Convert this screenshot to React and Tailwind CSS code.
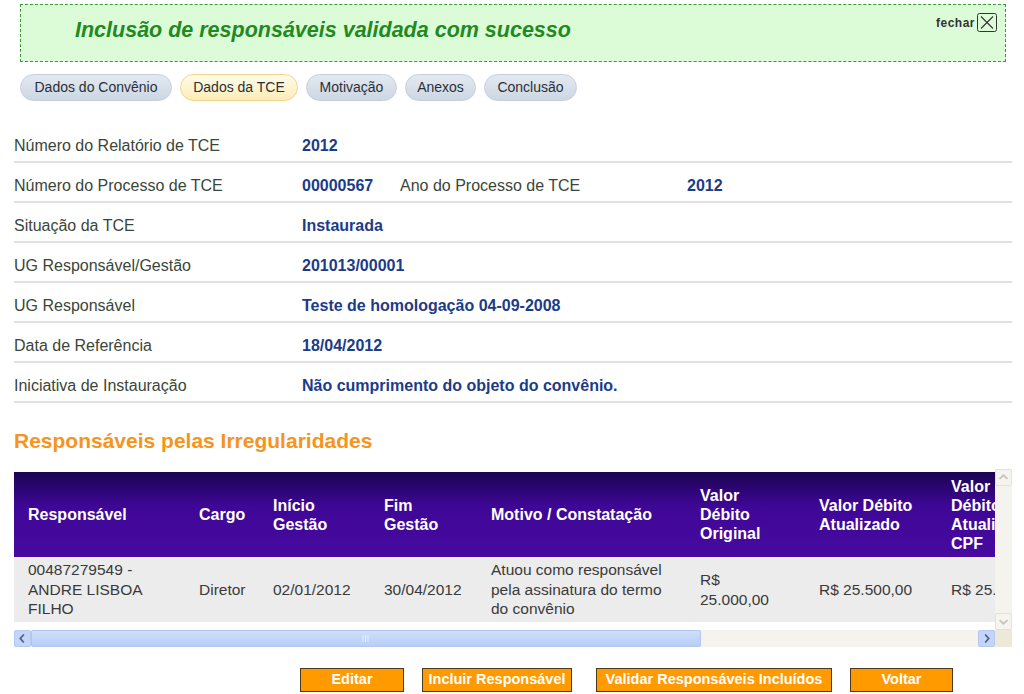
import React from "react"

const tabs = [
  { label: "Dados do Convênio", w: "w-[152px]" },
  { label: "Dados da TCE", w: "w-[118px]", active: true },
  { label: "Motivação", w: "w-[91px]" },
  { label: "Anexos", w: "w-[71px]" },
  { label: "Conclusão", w: "w-[93px]" },
]

const rows = [
  { label: "Número do Relatório de TCE", value: "2012" },
  { label: "Número do Processo de TCE", value: "00000567", label2: "Ano do Processo de TCE", value2: "2012" },
  { label: "Situação da TCE", value: "Instaurada" },
  { label: "UG Responsável/Gestão", value: "201013/00001" },
  { label: "UG Responsável", value: "Teste de homologação 04-09-2008" },
  { label: "Data de Referência", value: "18/04/2012" },
  { label: "Iniciativa de Instauração", value: "Não cumprimento do objeto do convênio." },
]

const cols = [
  { head: "Responsável", w: 171, cell: "00487279549 - ANDRE LISBOA FILHO" },
  { head: "Cargo", w: 74, cell: "Diretor" },
  { head: "Início Gestão", w: 111, cell: "02/01/2012" },
  { head: "Fim Gestão", w: 107, cell: "30/04/2012" },
  { head: "Motivo / Constatação", w: 209, cell: "Atuou como responsável pela assinatura do termo do convênio" },
  { head: "Valor Débito Original", w: 119, cell: "R$ 25.000,00" },
  { head: "Valor Débito Atualizado", w: 132, cell: "R$ 25.500,00" },
  { head: "Valor Débito Atualizado CPF", w: 120, cell: "R$ 25.500,00", nowrap: true },
]

const buttons = [
  { label: "Editar", cls: "w-[104px]" },
  { label: "Incluir Responsável", cls: "w-[150px] ml-[18px]" },
  { label: "Validar Responsáveis Incluídos", cls: "w-[236px] ml-[24px]" },
  { label: "Voltar", cls: "w-[103px] ml-[18px]" },
]

function ArrowBtn({ dir, faded }) {
  const d = {
    left: "M10 4 L6 8.5 L10 13",
    right: "M7 4 L11 8.5 L7 13",
    up: "M4 10 L8.5 6 L13 10",
    down: "M4 7 L8.5 11 L13 7",
  }[dir]
  return (
    <div
      className={
        "w-[17px] h-[17px] shrink-0 rounded-[2px] border flex items-center justify-center " +
        (faded ? "border-[#e4e2d8] bg-[#f5f4ee]" : "border-[#b5c8ee] bg-[#c3d5fb]")
      }
    >
      <svg width="17" height="17" viewBox="0 0 17 17">
        <path d={d} fill="none" stroke={faded ? "#c7c5bb" : "#4d6185"} strokeWidth="2" />
      </svg>
    </div>
  )
}

export default function App() {
  return (
    <div className="w-[1024px] h-[694px] bg-white overflow-hidden font-['Liberation_Sans',Arial,sans-serif]">
      {/* success message */}
      <div className="ml-[20px] mt-[4px] w-[986px] h-[58px] border border-dashed border-[#3c9a3c] bg-[#dcfcd8] flex items-start">
        <div className="flex-1 pl-[54px] pt-[12px] text-[21.5px] leading-[26px] font-bold italic text-[#1f8a1f]">
          Inclusão de responsáveis validada com sucesso
        </div>
        <div className="flex items-center gap-[2px] pt-[8px] pr-[8px]">
          <span className="text-[12px] font-bold text-[#333] tracking-[0.5px]">fechar</span>
          <svg width="20" height="19" viewBox="0 0 20 19">
            <rect x="0.5" y="0.5" width="19" height="18" rx="2" fill="none" stroke="#333" />
            <path d="M4 3.5 L16 15.5 M16 3.5 L4 15.5" stroke="#333" strokeWidth="1.1" />
          </svg>
        </div>
      </div>

      {/* tabs */}
      <div className="ml-[20px] mt-[12px] flex gap-[8px]">
        {tabs.map((t) => (
          <div
            key={t.label}
            className={
              t.w +
              " h-[27px] rounded-[14px] border flex items-center justify-center text-[14px] text-[#2a2f38] " +
              (t.active
                ? "border-[#f0d68a] bg-gradient-to-b from-[#fffbe8] to-[#fbecb8]"
                : "border-[#c5d0dc] bg-gradient-to-b from-[#e3e9f0] to-[#ccd7e3]")
            }
          >
            {t.label}
          </div>
        ))}
      </div>

      {/* info rows */}
      <div className="ml-[14px] mt-[22px] w-[998px]">
        {rows.map((r) => (
          <div key={r.label} className="h-[40px] border-b-2 border-[#e0e0e0] flex items-end pb-[6px] text-[16px] leading-[18px]">
            <div className="w-[288px] text-[#3a463a]">{r.label}</div>
            <div className={(r.label2 ? "w-[98px]" : "") + " font-bold text-[#1c3b88]"}>{r.value}</div>
            {r.label2 && (
              <>
                <div className="w-[287px] text-[#3a463a]">{r.label2}</div>
                <div className="font-bold text-[#1c3b88]">{r.value2}</div>
              </>
            )}
          </div>
        ))}
      </div>

      <h2 className="ml-[14px] mt-[26px] text-[21px] leading-[24px] font-bold text-[#f5941e]">
        Responsáveis pelas Irregularidades
      </h2>

      {/* table with scrollbars */}
      <div className="ml-[14px] mt-[16px] w-[998px]">
        <div className="flex">
          <div className="w-[981px] h-[161px] overflow-hidden pt-[3px] bg-white">
            <table className="table-fixed border-collapse" style={{ width: cols.reduce((s, c) => s + c.w, 0) }}>
              <colgroup>
                {cols.map((c) => (
                  <col key={c.head} style={{ width: c.w }} />
                ))}
              </colgroup>
              <thead>
                <tr className="h-[85px] bg-gradient-to-b from-[#1c0452] via-[#3e0796] via-[40%] to-[#470aa0]">
                  {cols.map((c) => (
                    <th key={c.head} className="text-left align-middle pl-[14px] pr-[16px] text-[16px] leading-[19px] font-bold text-white">
                      {c.head}
                    </th>
                  ))}
                </tr>
              </thead>
              <tbody>
                <tr className="h-[65px] bg-[#ececec]">
                  {cols.map((c) => (
                    <td
                      key={c.head}
                      className={
                        "align-middle pl-[14px] pr-[16px] text-[15.5px] leading-[19.5px] text-[#3a3a3a] " +
                        (c.nowrap ? "whitespace-nowrap" : "")
                      }
                    >
                      {c.cell}
                    </td>
                  ))}
                </tr>
              </tbody>
            </table>
          </div>
          {/* vertical scrollbar */}
          <div className="w-[17px] h-[161px] bg-[#f4f3ee] flex flex-col justify-between">
            <ArrowBtn dir="up" faded />
            <ArrowBtn dir="down" faded />
          </div>
        </div>
        <div className="flex h-[17px]">
          <div className="w-[981px] flex bg-[#f4f3ee]">
            <ArrowBtn dir="left" />
            <div className="w-[670px] h-[17px] rounded-[2px] border border-[#b1c6ee] bg-gradient-to-b from-[#cfdefc] to-[#b8cdf7] flex items-center justify-center">
              <svg width="8" height="7" viewBox="0 0 8 7">
                <path d="M1 0 V7 M3.5 0 V7 M6 0 V7" stroke="#e8eefc" strokeWidth="1" />
              </svg>
            </div>
            <div className="flex-1" />
            <ArrowBtn dir="right" />
          </div>
          <div className="w-[17px] bg-[#ece9d8]" />
        </div>
      </div>

      {/* buttons */}
      <div className="ml-[300px] mt-[21px] flex">
        {buttons.map((b) => (
          <div
            key={b.label}
            className={b.cls + " h-[24px] border border-[#4b3a1c] bg-[#ff9a00] flex items-center justify-center text-[14.5px] font-bold text-white"}
          >
            {b.label}
          </div>
        ))}
      </div>
    </div>
  )
}
